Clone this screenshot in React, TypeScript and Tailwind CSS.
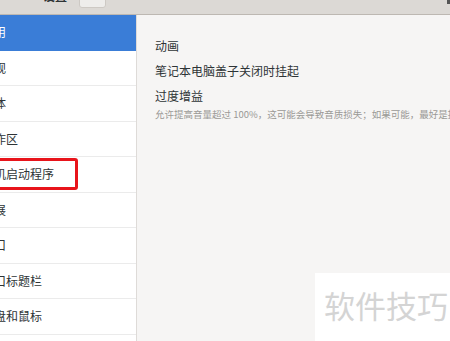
const ITEMS = [
  '通用',
  '外观',
  '字体',
  '工作区',
  '开机启动程序',
  '扩展',
  '窗口',
  '窗口标题栏',
  '键盘和鼠标',
  '顶部栏',
];

export default function App() {
  return (
    <div
      className="relative w-[450px] h-[341px] overflow-hidden bg-[#f6f5f4] text-[#2e3436]"
      style={{ fontFamily: '"Noto Sans CJK SC", "Noto Sans", sans-serif' }}
    >
      {/* Header bar */}
      <div className="h-[15px] bg-[#dcd9d5] border-b border-[#bdb8b2] overflow-hidden flex items-start">
        <div className="ml-[43px] mt-[-13px] text-[12px] leading-[18px] font-bold">设置</div>
        <div className="ml-[12px] mt-[-6px] w-[27px] h-[14px] rounded-[3px] bg-[#eeedeb] border border-[#cdc9c4]" />
        <div className="ml-auto w-[3px] h-[4px] bg-[#555]" />
      </div>

      <div className="flex h-[326px]">
        {/* Sidebar */}
        <div className="w-[137px] shrink-0 bg-white border-r border-[#dedbd8] overflow-hidden">
          {ITEMS.map((label, i) => (
            <div
              key={label}
              className={`h-[35.5px] flex items-center border-b text-[12px] whitespace-nowrap ${
                i === 0 ? 'bg-[#3a7dd7] text-white border-[#3a7dd7]' : 'border-[#ebebeb]'
              }`}
            >
              <span className="ml-[-18px]">{label}</span>
            </div>
          ))}
        </div>

        {/* Main pane */}
        <div className="flex-1 pl-[18px] pt-[18px] whitespace-nowrap overflow-hidden">
          <div className="text-[12px] leading-[25px]">动画</div>
          <div className="text-[12px] leading-[25px]">笔记本电脑盖子关闭时挂起</div>
          <div className="text-[12px] leading-[25px]">过度增益</div>
          <div className="text-[9.5px] leading-[12px] text-[#9a9996]">
            允许提高音量超过 100%，这可能会导致音质损失；如果可能，最好是提高应用程序的音量。
          </div>
        </div>
      </div>

      {/* Red highlight box */}
      <div className="absolute left-[-6px] top-[158px] w-[84px] h-[32px] border-[3px] border-[#e8141b] rounded-[3px]" />

      {/* Watermark */}
      <div className="absolute left-[315px] top-[273px] right-0 bottom-0 bg-white pl-[9px] pt-[12px]">
        <span className="text-[31px] leading-[40px] text-[#d4d4d4]">软件技巧</span>
      </div>
    </div>
  );
}
